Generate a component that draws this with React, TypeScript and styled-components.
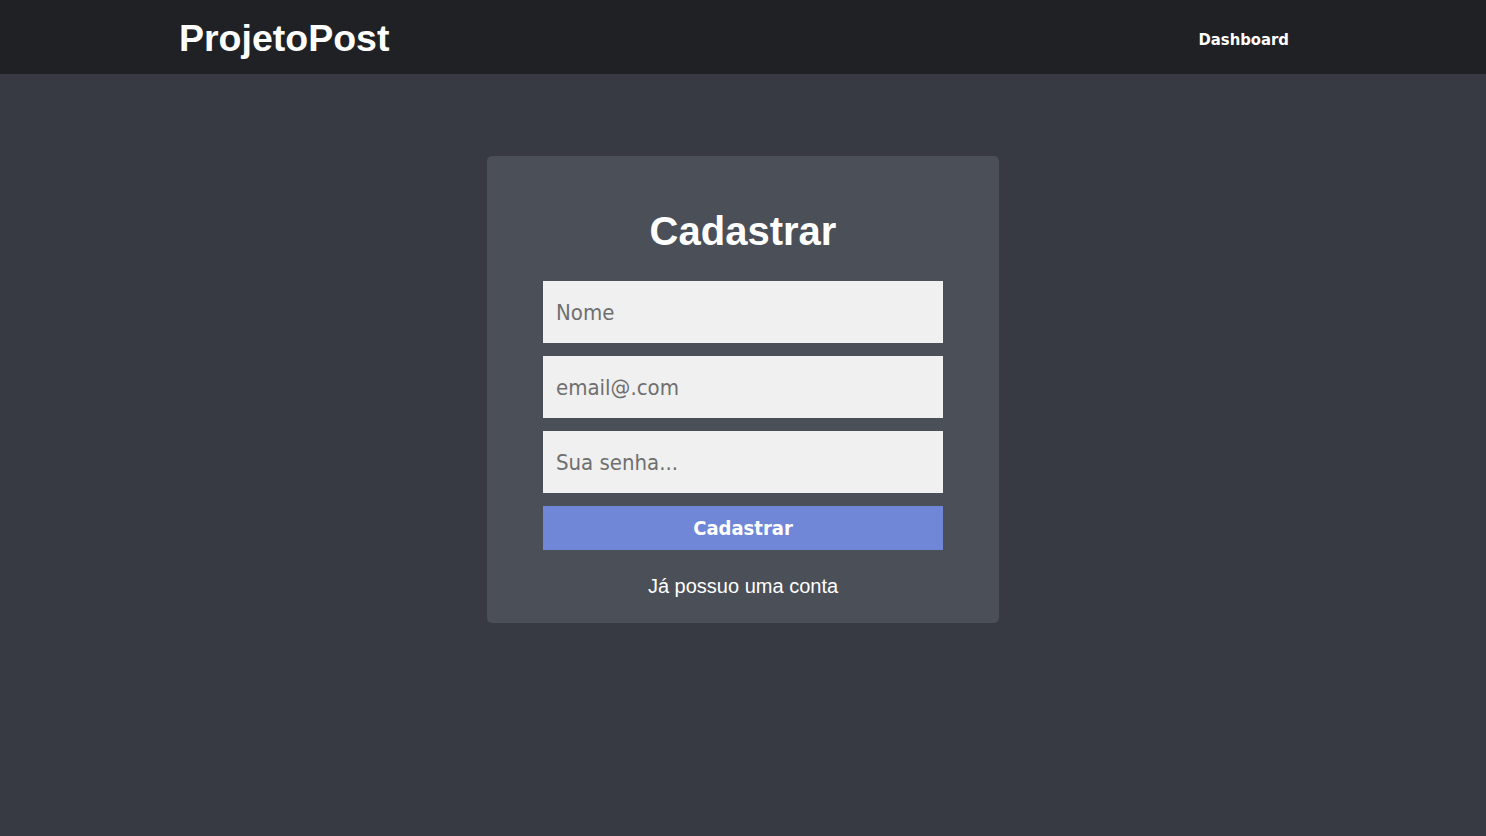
import React from 'react';
import styled, { createGlobalStyle } from 'styled-components';

const GlobalStyle = createGlobalStyle`
    * {
        box-sizing: border-box;
    }
    body {
        margin: 0;
        background: #373a43;
        font-family: 'Liberation Sans', Arial, sans-serif;
        color: #fff;
    }
`;

const Header = styled.header`
    height: 74px;
    background: #202125;
`;

const HeaderInner = styled.div`
    max-width: 1128px;
    height: 100%;
    margin: 0 auto;
    padding-top: 2px;
    display: flex;
    align-items: center;
    justify-content: space-between;
`;

const Logo = styled.a`
    font-family: 'Liberation Sans', Arial, sans-serif;
    font-size: 37.5px;
    font-weight: 700;
    color: #fff;
    text-decoration: none;
`;

const NavLink = styled.a`
    margin-top: 2px;
    padding: 0 18px;
    font-family: 'DejaVu Sans Condensed', 'DejaVu Sans', sans-serif;
    font-size: 16.5px;
    font-weight: 700;
    color: #fff;
    text-decoration: none;
`;

const Main = styled.main`
    display: flex;
    justify-content: center;
    padding-top: 82px;
`;

const Card = styled.form`
    width: 512px;
    padding: 52px 56px 25px;
    background: #4b4f58;
    border-radius: 5px;
    display: flex;
    flex-direction: column;
    align-items: center;
`;

const Title = styled.h1`
    margin: 0 0 27px;
    font-size: 40px;
    line-height: 46px;
    font-weight: 700;
`;

const Input = styled.input`
    width: 400px;
    height: 62px;
    margin-bottom: 13px;
    padding: 0 13px;
    border: 0;
    outline: none;
    background: #f0f0f0;
    font-family: 'DejaVu Sans Condensed', 'DejaVu Sans', sans-serif;
    font-size: 22px;
    color: #333;
    &::placeholder {
        color: #6f6f6f;
    }
`;

const Button = styled.button`
    width: 400px;
    height: 44px;
    border: 0;
    background: #7087d8;
    color: #fff;
    font-family: 'DejaVu Sans Condensed', 'DejaVu Sans', sans-serif;
    font-size: 20px;
    font-weight: 700;
    cursor: pointer;
`;

const SwitchLink = styled.a`
    margin-top: 25px;
    font-size: 20px;
    line-height: 23px;
    color: #fff;
    text-decoration: none;
`;

export default function App() {
    return (
        <>
            <GlobalStyle />
            <Header>
                <HeaderInner>
                    <Logo href="#">ProjetoPost</Logo>
                    <NavLink href="#">Dashboard</NavLink>
                </HeaderInner>
            </Header>
            <Main>
                <Card onSubmit={(e) => e.preventDefault()}>
                    <Title>Cadastrar</Title>
                    <Input type="text" placeholder="Nome" />
                    <Input type="email" placeholder="email@.com" />
                    <Input type="password" placeholder="Sua senha..." />
                    <Button type="submit">Cadastrar</Button>
                    <SwitchLink href="#">Já possuo uma conta</SwitchLink>
                </Card>
            </Main>
        </>
    );
}
